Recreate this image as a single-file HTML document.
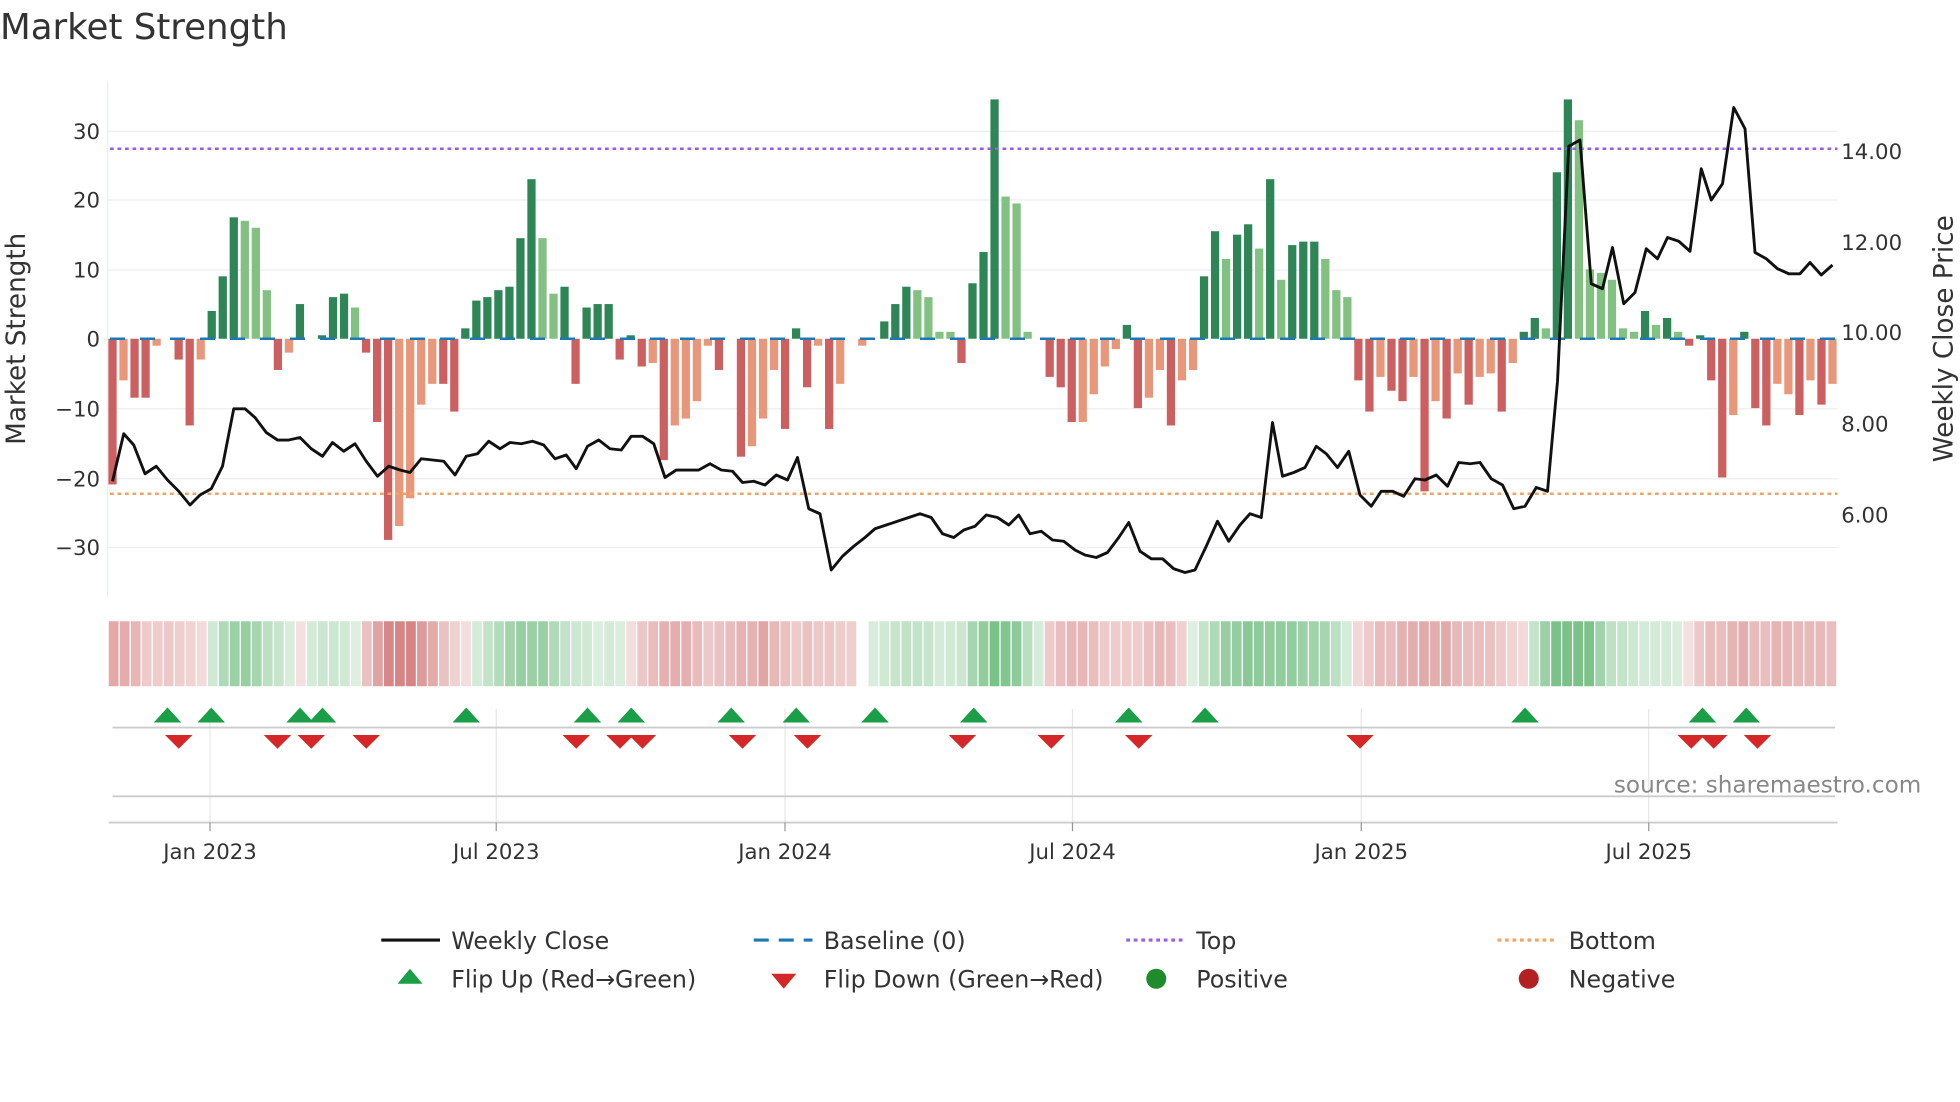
<!DOCTYPE html>
<html><head><meta charset="utf-8"><style>
html,body{margin:0;padding:0;background:#fff;width:1960px;height:1102px;overflow:hidden}
svg{display:block;font-family:"DejaVu Sans","Liberation Sans",sans-serif}
</style></head><body>
<svg id="s" width="1960" height="1102" viewBox="0 0 1568 881.6" xmlns="http://www.w3.org/2000/svg">
<rect width="1568" height="882" fill="#fff"/>
<text x="0" y="31" font-size="28.5" fill="#333">Market Strength</text>
<g stroke="#eceef3" stroke-width="1">
<line x1="86" y1="105" x2="1470" y2="105"/><line x1="86" y1="160" x2="1470" y2="160"/><line x1="86" y1="216" x2="1470" y2="216"/><line x1="86" y1="327" x2="1470" y2="327"/><line x1="86" y1="383" x2="1470" y2="383"/><line x1="86" y1="438" x2="1470" y2="438"/>
<line x1="86" y1="65" x2="86" y2="478"/>
</g>
<g font-size="17" fill="#333" text-anchor="end">
<text x="80" y="111">30</text><text x="80" y="166">20</text><text x="80" y="222">10</text><text x="80" y="277">0</text><text x="80" y="333">−10</text><text x="80" y="389">−20</text><text x="80" y="444">−30</text>
</g>
<g font-size="17" fill="#333">
<text x="1473" y="127">14.00</text><text x="1473" y="200">12.00</text><text x="1473" y="272">10.00</text><text x="1473" y="345">8.00</text><text x="1473" y="418">6.00</text>
</g>
<text transform="translate(20,271) rotate(-90)" font-size="21" fill="#333" text-anchor="middle">Market Strength</text>
<text transform="translate(1562,271) rotate(-90)" font-size="21" fill="#333" text-anchor="middle">Weekly Close Price</text>
<g id="bars"></g>
<line x1="88" y1="271" x2="1470" y2="271" stroke="#1f77b4" stroke-width="2" stroke-dasharray="12,12"/>
<line x1="88" y1="119" x2="1470" y2="119" stroke="#9b5de5" stroke-width="2" stroke-dasharray="3,3"/>
<line x1="88" y1="395" x2="1470" y2="395" stroke="#f4a460" stroke-width="2" stroke-dasharray="3,3"/>
<polyline id="price" fill="none" stroke="#111" stroke-width="2.3" stroke-linejoin="round"/>
<g id="heat"></g>
<g stroke="#e6e6e6" stroke-width="1">
<line x1="168" y1="567" x2="168" y2="660"/><line x1="397" y1="567" x2="397" y2="660"/><line x1="628" y1="567" x2="628" y2="660"/><line x1="858" y1="567" x2="858" y2="660"/><line x1="1089" y1="567" x2="1089" y2="660"/><line x1="1319" y1="567" x2="1319" y2="660"/>
</g>
<line x1="90" y1="582" x2="1468" y2="582" stroke="#ccc" stroke-width="1.5"/>
<line x1="90" y1="637" x2="1468" y2="637" stroke="#ccc" stroke-width="1.5"/>
<line x1="87" y1="658" x2="1470" y2="658" stroke="#ccc" stroke-width="1.5"/>
<g stroke="#999" stroke-width="1"><line x1="168" y1="658" x2="168" y2="665"/><line x1="397" y1="658" x2="397" y2="665"/><line x1="628" y1="658" x2="628" y2="665"/><line x1="858" y1="658" x2="858" y2="665"/><line x1="1089" y1="658" x2="1089" y2="665"/><line x1="1319" y1="658" x2="1319" y2="665"/></g>
<g id="flips"></g>
<text x="1537" y="634" font-size="18.5" fill="#888" text-anchor="end">source: sharemaestro.com</text>
<g font-size="17" fill="#333" text-anchor="middle">
<text x="168" y="687">Jan 2023</text><text x="397" y="687">Jul 2023</text><text x="628" y="687">Jan 2024</text><text x="858" y="687">Jul 2024</text><text x="1089" y="687">Jan 2025</text><text x="1319" y="687">Jul 2025</text>
</g>
<g font-size="19" fill="#333">
<line x1="305" y1="752" x2="352" y2="752" stroke="#111" stroke-width="2.5"/><text x="361" y="759">Weekly Close</text>
<line x1="603" y1="752" x2="650" y2="752" stroke="#1f77b4" stroke-width="2.5" stroke-dasharray="12,8"/><text x="659" y="759">Baseline (0)</text>
<line x1="901" y1="752" x2="946" y2="752" stroke="#9b5de5" stroke-width="2.5" stroke-dasharray="3,3"/><text x="957" y="759">Top</text>
<line x1="1198" y1="752" x2="1244" y2="752" stroke="#f4a460" stroke-width="2.5" stroke-dasharray="3,3"/><text x="1255" y="759">Bottom</text>
<polygon points="328,775 338,787 318,787" fill="#1a9e47"/><text x="361" y="790">Flip Up (Red→Green)</text>
<polygon points="617,779 637,779 627,791" fill="#d62728"/><text x="659" y="790">Flip Down (Green→Red)</text>
<circle cx="925" cy="783" r="8" fill="#1f8b2c"/><text x="957" y="790">Positive</text>
<circle cx="1223" cy="783" r="8" fill="#b22222"/><text x="1255" y="790">Negative</text>
</g>
</svg>
<script>
var NS="http://www.w3.org/2000/svg";
var B="-21r -6l -8.5r -8.5r -1l 0l -3r -12.5r -3l 4d 9d 17.5d 17l 16l 7l -4.5r -2l 5d 0l 0.5d 6d 6.5d 4.5l -2r -12r -29r -27l -23l -9.5l -6.5l -6.5r -10.5r 1.5d 5.5d 6d 7d 7.5d 14.5d 23d 14.5l 6.5l 7.5d -6.5r 4.5d 5d 5d -3r 0.5d -4r -3.5l -17.5r -12.5l -11.5l -9l -1l -4.5r 0l -17r -15.5l -11.5l -4.5l -13r 1.5d -7r -1l -13r -6.5l 0l -1l 0l 2.5d 5d 7.5d 7l 6l 1l 1l -3.5r 8d 12.5d 34.5d 20.5l 19.5l 1l 0l -5.5r -7r -12r -12l -8l -4l -1.5l 2d -10r -8.5l -4.5l -12.5r -6l -4.5l 9d 15.5d 11.5l 15d 16.5d 13l 23d 8.5l 13.5d 14d 14d 11.5l 7l 6l -6r -10.5r -5.5l -7.5r -9r -5.5l -22r -9l -11.5r -5l -9.5r -5.5l -5l -10.5r -3.5l 1d 3d 1.5l 24d 34.5d 31.5l 10l 9.5l 8.5l 1.5l 1l 4d 2l 3d 1l -1r 0.5d -6r -20r -11l 1d -10r -12.5r -6.5l -8l -11r -6l -9.5r -6.5l".split(" ");
var C={d:"#2e8555",l:"#82c182",r:"#cc5f5f",L:"#e8977a"};
var n=B.length, x0=90, dx=(1466-90)/(n-1);
var bars=document.getElementById("bars"), heat=document.getElementById("heat");
var vals=[];
B.forEach(function(s,i){
 var t=s.slice(-1), v=parseFloat(s); vals.push(v);
 if(v<0&&t=="l") t="L";
 var x=x0+i*dx, y=271-v*5.55;
 if(Math.abs(v)>0.01){
  var r=document.createElementNS(NS,"rect");
  r.setAttribute("x",x-3.3);r.setAttribute("width",6.6);
  r.setAttribute("y",Math.min(y,271));r.setAttribute("height",Math.abs(y-271));
  r.setAttribute("fill",C[t]);bars.appendChild(r);
 }
});
var w=(1470-87)/n;
for(var i=0;i<n;i++){
 var s=0,c=0;for(var k=-2;k<=2;k++){if(vals[i+k]!==undefined){s+=vals[i+k];c++;}}
 var v=s/c, a=Math.min(0.9,0.22+Math.abs(v)/28);
 var col=v>=0?"rgba(70,170,90,"+(a*0.8).toFixed(2)+")":"rgba(200,85,85,"+(a*0.8).toFixed(2)+")";
 var x=87+i*w;
 if(Math.abs(x-683)<w/2+0.5) col="#fff";
 var r=document.createElementNS(NS,"rect");
 r.setAttribute("x",x);r.setAttribute("width",w-1);
 r.setAttribute("y",497);r.setAttribute("height",52);r.setAttribute("fill",col);heat.appendChild(r);
}
var P="90,385 99,347 107,356 116,379 125,373 134,384 143,393 152,404 160,396 169,391 178,373 187,327 196,327 204,334 213,346 222,352 231,352 240,350 249,359 258,365 266,354 275,361 284,355 293,369 302,381 311,373 320,376 328,378 337,367 346,368 355,369 364,380 373,365 382,363 391,353 400,359 408,354 417,355 426,353 435,356 444,367 453,364 461,375 470,357 479,352 488,359 497,360 505,349 514,349 523,355 532,382 541,376 550,376 559,376 568,371 577,376 586,377 594,386 603,385 612,388 621,380 630,384 638,366 647,407 656,411 665,456 674,445 683,437 692,430 700,423 709,420 718,417 727,414 736,411 745,414 754,427 763,430 771,424 780,421 789,412 798,414 807,420 815,412 824,427 833,425 842,432 851,433 860,440 868,444 877,446 886,442 895,430 903,418 912,441 921,447 930,447 939,455 948,458 956,456 965,437 974,417 983,433 992,420 1000,411 1009,414 1018,338 1026,381 1035,378 1044,374 1053,357 1061,363 1070,374 1079,361 1088,396 1097,405 1105,393 1114,393 1123,397 1132,383 1140,384 1149,380 1158,389 1167,370 1176,371 1184,370 1193,383 1202,388 1211,407 1220,405 1229,390 1238,393 1246,305 1255,117 1264,112 1273,227 1282,231 1290,198 1299,243 1308,234 1317,199 1326,207 1334,190 1343,193 1352,201 1361,135 1369,160 1378,147 1387,86 1396,103 1404,202 1413,207 1422,215 1431,219 1440,219 1448,210 1457,220 1466,212";
document.getElementById("price").setAttribute("points",P);
var fl=document.getElementById("flips");
[134,169,240,258,373,470,505,585,637,700,779,903,964,1220,1362,1397].forEach(function(x){
 var p=document.createElementNS(NS,"polygon");p.setAttribute("points",(x)+",566 "+(x+11)+",578 "+(x-11)+",578");p.setAttribute("fill","#1a9e47");fl.appendChild(p);});
[143,222,249,293,461,496,514,594,646,770,841,911,1088,1353,1371,1406].forEach(function(x){
 var p=document.createElementNS(NS,"polygon");p.setAttribute("points",(x-11)+",588 "+(x+11)+",588 "+x+",599");p.setAttribute("fill","#d62728");fl.appendChild(p);});
</script>
</body></html>
